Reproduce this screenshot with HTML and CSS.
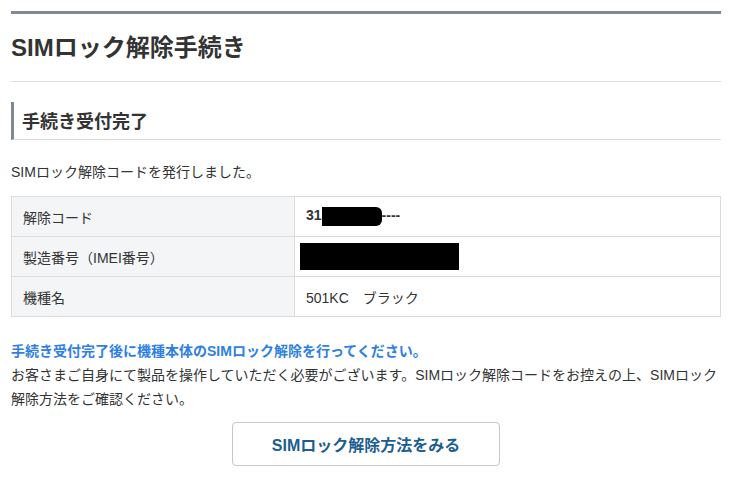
FILE: index.html
```html
<!DOCTYPE html>
<html lang="ja">
<head>
<meta charset="utf-8">
<title>SIMロック解除手続き</title>
<link rel="stylesheet" href="styles.css">
</head>
<body>
<main class="page">
  <h1 class="page-title">SIMロック解除手続き</h1>
  <h2 class="section-title">手続き受付完了</h2>
  <p class="lead">SIMロック解除コードを発行しました。</p>
  <table class="info">
    <tr>
      <th>解除コード</th>
      <td class="code">31<span class="mask mask-code"></span>----</td>
    </tr>
    <tr>
      <th>製造番号（IMEI番号）</th>
      <td><span class="mask mask-imei"></span></td>
    </tr>
    <tr>
      <th>機種名</th>
      <td>501KC　ブラック</td>
    </tr>
  </table>
  <p class="notice">手続き受付完了後に機種本体のSIMロック解除を行ってください。</p>
  <p class="body-text">お客さまご自身にて製品を操作していただく必要がございます。SIMロック解除コードをお控えの上、SIMロック解除方法をご確認ください。</p>
  <div class="actions">
    <a class="btn" href="#">SIMロック解除方法をみる</a>
  </div>
</main>
</body>
</html>
```

FILE: styles.css
```css
* { box-sizing: border-box; }
html, body { margin: 0; padding: 0; background: #fff; }
body {
  font-family: "Liberation Sans", "Noto Sans CJK JP", sans-serif;
  color: #333;
  font-size: 14px;
}
.page {
  padding: 11px 11px 0;
  width: 732px;
}
.page-title {
  margin: 0;
  border-top: 3px solid #7f8893;
  border-bottom: 1px solid #dcdcdc;
  padding: 17px 0 16px;
  font-size: 24px;
  line-height: 34px;
  font-weight: bold;
  color: #333;
}
.section-title {
  margin: 20px 0 0;
  border-left: 3px solid #7f8893;
  border-bottom: 1px solid #dcdcdc;
  padding: 7px 8px 4px;
  font-size: 18px;
  line-height: 26px;
  font-weight: bold;
  color: #333;
}
.lead {
  margin: 22px 0 14px;
  font-size: 14px;
  line-height: 20px;
}
.info {
  width: 100%;
  border-collapse: collapse;
  font-size: 14px;
}
.info th, .info td {
  border: 1px solid #dcdcdc;
  height: 40px;
  padding: 0 11px;
  text-align: left;
  vertical-align: middle;
  font-weight: normal;
}
.info th {
  width: 283px;
  background: #f4f5f7;
}
.info td.code {
  font-weight: bold;
}
.mask {
  display: inline-block;
  background: #000;
  vertical-align: middle;
}
.mask-code {
  width: 60px;
  height: 19px;
  border-radius: 0 6px 6px 0;
}
.mask-imei {
  width: 159px;
  height: 27px;
  margin-left: -6px;
}
.notice {
  margin: 22px 0 0;
  font-size: 14px;
  line-height: 24px;
  font-weight: bold;
  color: #2f7fe3;
}
.body-text {
  margin: 0;
  font-size: 14px;
  line-height: 24px;
}
.actions {
  display: flex;
  justify-content: center;
  margin-top: 11px;
}
.btn {
  display: flex;
  align-items: center;
  justify-content: center;
  width: 268px;
  height: 44px;
  border: 1px solid #c6c6c6;
  border-radius: 4px;
  font-size: 16px;
  font-weight: bold;
  color: #1b5e90;
  text-decoration: none;
}
```
